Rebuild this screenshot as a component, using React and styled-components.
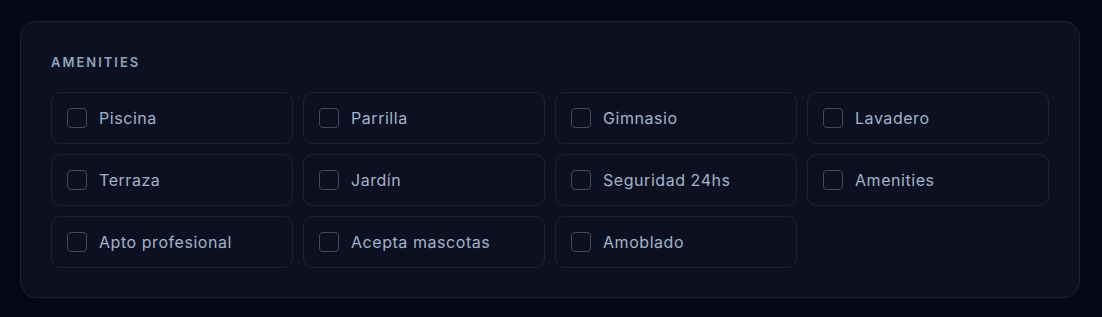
import React from 'react'
import { styled, createGlobalStyle } from 'styled-components'

const GlobalStyle = createGlobalStyle`
    html, body {
        margin: 0;
        padding: 0;
        background: #060817;
        font-family: Inter, "DejaVu Sans", sans-serif;
    }
    #root {
        padding: 21px 22px 19px 20px;
    }
`;

const amenities = [
    'Piscina', 'Parrilla', 'Gimnasio', 'Lavadero',
    'Terraza', 'Jardín', 'Seguridad 24hs', 'Amenities',
    'Apto profesional', 'Acepta mascotas', 'Amoblado',
];

const App = () => {
    return (
        <>
            <GlobalStyle />
            <StyledCard>
                <StyledTitle>Amenities</StyledTitle>
                <StyledGrid>
                    {amenities.map((name) => (
                        <StyledOption key={name}>
                            <StyledBox type="checkbox" />
                            <span>{name}</span>
                        </StyledOption>
                    ))}
                </StyledGrid>
            </StyledCard>
        </>
    );
}

const StyledCard = styled.section`
    box-sizing: border-box;
    width: 1060px;
    height: 277px;
    padding: 30px;
    background: #0c1020;
    border: 1px solid #1d2232;
    border-radius: 16px;
`;

const StyledTitle = styled.h3`
    margin: 0 0 20px;
    height: 20px;
    line-height: 20px;
    font-size: 13px;
    font-weight: 600;
    letter-spacing: 2px;
    text-transform: uppercase;
    color: #8fa3bf;
`;

const StyledGrid = styled.div`
    display: grid;
    grid-template-columns: repeat(4, 242px);
    grid-auto-rows: 52px;
    gap: 10px;
`;

const StyledOption = styled.label`
    box-sizing: border-box;
    display: flex;
    align-items: center;
    gap: 12px;
    padding: 0 15px;
    border: 1px solid #1e2334;
    border-radius: 10px;
    color: #a3b3cb;
    font-size: 16px;
    letter-spacing: 0.55px;
    cursor: pointer;
`;

const StyledBox = styled.input`
    appearance: none;
    margin: 0;
    width: 20px;
    height: 20px;
    border: 1px solid #444b5c;
    border-radius: 4px;
    background: transparent;
`;

export default App;
